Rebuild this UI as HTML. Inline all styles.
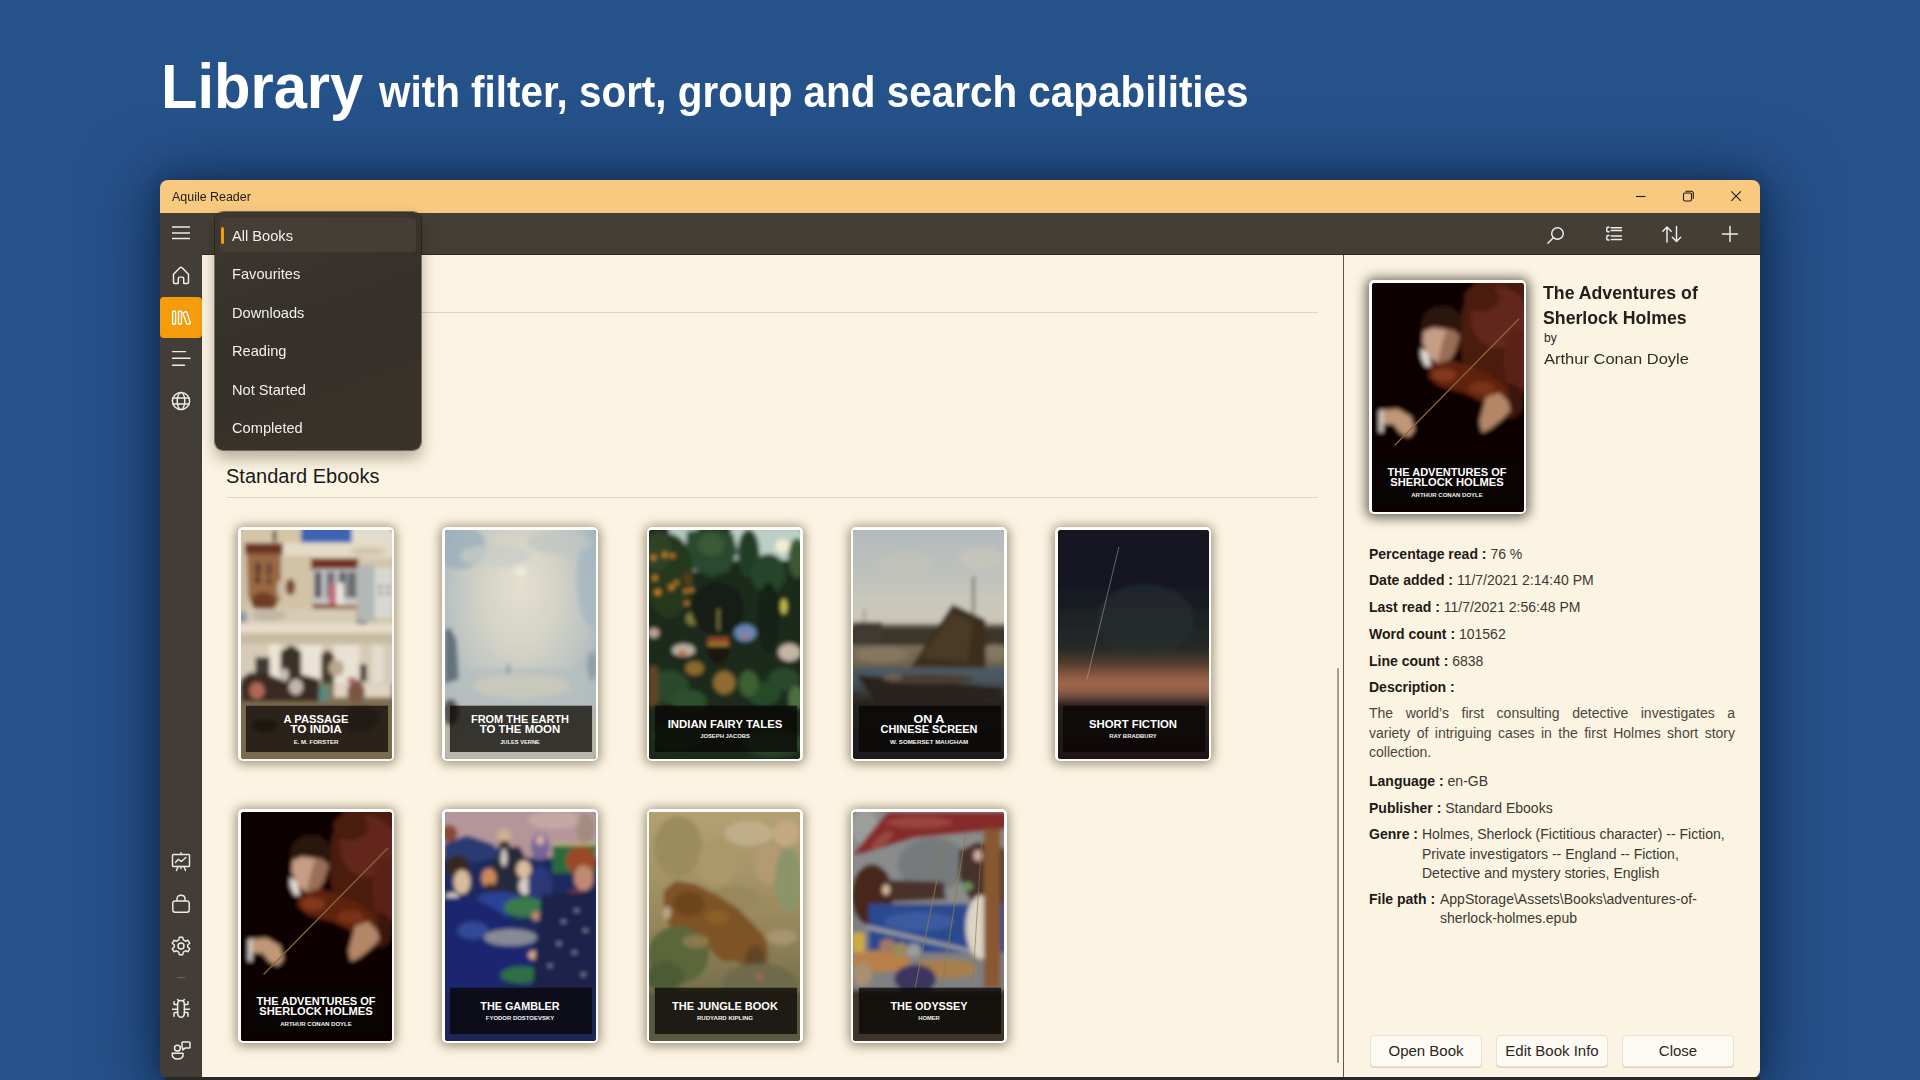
<!DOCTYPE html>
<html><head><meta charset="utf-8">
<style>
*{margin:0;padding:0;box-sizing:border-box}
html,body{width:1920px;height:1080px;overflow:hidden}
body{background:#26528a;font-family:"Liberation Sans",sans-serif;position:relative}
.a{position:absolute;white-space:nowrap}
.sx{transform-origin:0 0}
.h1{left:160.5px;top:45.5px;color:#fff;font-weight:bold;font-size:63px;line-height:80px}
.h2{left:379px;top:62px;color:#fff;font-weight:bold;font-size:44px;line-height:60px}
#shadow{position:absolute;left:160px;top:180px;width:1600px;height:898px;border-radius:8px;box-shadow:0 8px 70px 6px rgba(6,16,40,0.55),0 2px 24px rgba(6,16,40,0.4)}
#title{position:absolute;left:160px;top:180px;width:1600px;height:33px;background:#f8c97f;border-radius:8px 8px 0 0}
#tool{position:absolute;left:160px;top:213px;width:1600px;height:42px;background:#433f37;border-bottom:1px solid #2e2c27}
#side{position:absolute;left:160px;top:213px;width:42px;height:865px;background:#423e37;border-radius:0 0 0 8px}
#content{position:absolute;left:202px;top:255px;width:1141px;height:823px;background:#fcf4e2}
#divider{position:absolute;left:1343px;top:255px;width:1px;height:823px;background:#5d564c}
#panel{position:absolute;left:1344px;top:255px;width:416px;height:823px;background:#fcf4e2;border-radius:0 0 8px 0}
#bottomline{position:absolute;left:165px;top:1077px;width:1595px;height:3px;background:#2a2824}
svg{position:absolute;overflow:visible}
.ttl{font-size:13px;line-height:16px;color:#1e1b16}
.menu{position:absolute;left:215px;top:212px;width:206px;height:238px;border-radius:8px;background:linear-gradient(160deg,#3d3730 0%,#35302a 50%,#3a332b 100%);box-shadow:0 8px 16px rgba(40,30,10,0.35),0 0 0 1px rgba(20,18,15,0.5)}
.msel{position:absolute;left:220px;top:218px;width:196px;height:34px;border-radius:4px;background:#443e37}
.mbar{position:absolute;left:221px;top:227px;width:3px;height:17px;border-radius:2px;background:#f39c0d}
.mi{font-size:15px;line-height:18px;color:#f2efea;transform:scaleX(0.975)}
.grp{font-size:20px;line-height:24px;color:#1a1a1a}
.hl{position:absolute;height:1px;background:#ddd5c4}
.pt{color:#1c1a17}
.lab{font-weight:bold;color:#1c1a17}
.val{color:#3b3833}
.btn{position:absolute;top:1035px;height:32px;width:112px;border-radius:4px;background:#fdfaf4;border:1px solid #e9e2d4;box-shadow:0 1px 0 #ddd5c4}
.bt{font-size:15px;line-height:18px;color:#2a2723}
.ptitle{font-size:19px;line-height:24px;font-weight:bold;color:#22201c;transform:scaleX(0.932)}
.pby{font-size:12px;line-height:14px;color:#2a2723}
.pauth{font-size:15px;line-height:18px;color:#2f2c27;transform:scaleX(1.1)}
.prow{font-size:14px;line-height:18px}
.pdesc{font-size:14px;line-height:18px;color:#4a463f;width:366px;white-space:normal}
.j{text-align:justify;text-align-last:justify}
.card{position:absolute;border-radius:5px;background:#fcfcfa;padding:2.5px}
.cin{position:relative;overflow:hidden;border-radius:3px;background:#000}
.cin text{font-family:"Liberation Sans",sans-serif}
</style></head>
<body>
<div class="a h1 sx" id="t_lib" style="transform:scaleX(0.947)">Library</div>
<div class="a h2 sx" id="t_sub" style="transform:scaleX(0.919)">with filter, sort, group and search capabilities</div>

<div id="shadow"></div>
<div id="title"></div>
<div id="tool"></div>
<div id="side"></div>
<div id="content"></div>
<div id="divider"></div>
<div id="panel"></div>
<div id="bottomline"></div>

<!-- title bar -->
<div class="a ttl sx" style="left:172px;top:189px;transform:scaleX(0.957)">Aquile Reader</div>
<svg style="left:1630px;top:186px" width="20" height="20" viewBox="0 0 20 20"><path d="M6 10.5H15.5" stroke="#1b1b1b" stroke-width="1.1" fill="none"/></svg>
<svg style="left:1678px;top:186px" width="20" height="20" viewBox="0 0 20 20"><rect x="5.5" y="7" width="8" height="8" rx="1.5" stroke="#1b1b1b" stroke-width="1.1" fill="none"/><path d="M7.5 5.3H13.5A1.8 1.8 0 0 1 15.3 7.1V13" stroke="#1b1b1b" stroke-width="1.1" fill="none"/></svg>
<svg style="left:1726px;top:186px" width="20" height="20" viewBox="0 0 20 20"><path d="M5.3 5.3L14.8 14.8M14.8 5.3L5.3 14.8" stroke="#1b1b1b" stroke-width="1.1" fill="none"/></svg>

<!-- toolbar icons -->
<svg style="left:1545px;top:224px" width="22" height="22" viewBox="0 0 22 22"><circle cx="12.5" cy="9.5" r="5.8" stroke="#f1eee9" stroke-width="1.45" fill="none"/><path d="M8.3 13.8L2.8 19.3" stroke="#f1eee9" stroke-width="1.4" fill="none" stroke-linecap="round"/></svg>
<svg style="left:1603px;top:224px" width="22" height="22" viewBox="0 0 22 22"><path d="M6 3.3H4.8A1 1 0 0 0 3.8 4.3V6.8A1 1 0 0 0 4.8 7.8H6M6 11.5H4.8A1 1 0 0 0 3.8 12.5V15A1 1 0 0 0 4.8 16H6M8.2 3.8H18.5M8.2 6.4H18.5M8.2 12H18.5M8.2 15.5H18.5" stroke="#f1eee9" stroke-width="1.45" fill="none" stroke-linecap="round"/></svg>
<svg style="left:1661px;top:223px" width="22" height="22" viewBox="0 0 22 22"><path d="M6 19V4M1.8 8.2L6 4L10.2 8.2M15.5 3.5V18.5M11.3 14.3L15.5 18.5L19.7 14.3" stroke="#f1eee9" stroke-width="1.45" fill="none" stroke-linecap="round" stroke-linejoin="round"/></svg>
<svg style="left:1719px;top:223px" width="22" height="22" viewBox="0 0 22 22"><path d="M11 3.5V18.5M3.5 11H18.5" stroke="#f1eee9" stroke-width="1.45" fill="none" stroke-linecap="round"/></svg>

<!-- sidebar -->
<svg style="left:170px;top:224px" width="22" height="18" viewBox="0 0 22 18"><path d="M2 3H20M2 9H20M2 14.5H20" stroke="#eeebe6" stroke-width="1.45" fill="none"/></svg>
<svg style="left:170px;top:264px" width="22" height="22" viewBox="0 0 22 22"><path d="M3.5 10.2L10.2 3.6Q11 2.8 11.8 3.6L18.5 10.2V18.3Q18.5 19.5 17.3 19.5H14.3Q13.7 19.5 13.7 18.9V14.3Q13.7 13.1 12.5 13.1H9.5Q8.3 13.1 8.3 14.3V18.9Q8.3 19.5 7.7 19.5H4.7Q3.5 19.5 3.5 18.3Z" stroke="#f3f0eb" stroke-width="1.45" fill="none" stroke-linejoin="round"/></svg>
<div class="a" style="left:160px;top:297px;width:42px;height:41px;background:#f49c0c;border-radius:4px"></div>
<svg style="left:170px;top:304px" width="22" height="22" viewBox="0 0 22 22"><rect x="2.6" y="7.2" width="3" height="13" rx="0.8" stroke="#fff" stroke-width="1.35" fill="none"/><rect x="8.5" y="7.2" width="3" height="13" rx="0.8" stroke="#fff" stroke-width="1.35" fill="none"/><path d="M13.4 8.6L15.8 7.7Q16.5 7.5 16.8 8.2L20.3 18.6Q20.5 19.3 19.8 19.5L17.6 20.3Q16.9 20.5 16.6 19.8L13 9.4Q12.8 8.8 13.4 8.6Z" stroke="#fff" stroke-width="1.35" fill="none"/></svg>
<svg style="left:170px;top:347px" width="22" height="22" viewBox="0 0 22 22"><path d="M2.5 4.6H15.5M2.5 11.3H20M2.5 18.3H14.5" stroke="#eeebe6" stroke-width="1.45" fill="none" stroke-linecap="round"/></svg>
<svg style="left:170px;top:390px" width="22" height="22" viewBox="0 0 22 22"><circle cx="11" cy="11" r="8.6" stroke="#eeebe6" stroke-width="1.45" fill="none"/><ellipse cx="11" cy="11" rx="3.8" ry="8.6" stroke="#eeebe6" stroke-width="1.45" fill="none"/><path d="M2.6 8H19.4M2.6 14H19.4" stroke="#eeebe6" stroke-width="1.45" fill="none"/></svg>

<svg style="left:170px;top:851px" width="22" height="22" viewBox="0 0 22 22"><rect x="2.5" y="3.5" width="17" height="12" rx="0.8" stroke="#eeebe6" stroke-width="1.45" fill="none"/><path d="M11 1.8V3.5M5.5 11.5L8.3 8.3L11.3 10.5L15.8 6.5M8 15.5L6.5 19.5M14 15.5L15.5 19.5M11 15.5V17.5" stroke="#eeebe6" stroke-width="1.45" fill="none" stroke-linecap="round" stroke-linejoin="round"/></svg>
<svg style="left:170px;top:893px" width="22" height="22" viewBox="0 0 22 22"><rect x="2.8" y="8" width="16.4" height="11.3" rx="2.2" stroke="#eeebe6" stroke-width="1.45" fill="none"/><path d="M7 8V6Q7 2.3 11 2.3Q15 2.3 15 6V8" stroke="#eeebe6" stroke-width="1.45" fill="none"/></svg>
<svg style="left:170px;top:935px" width="22" height="22" viewBox="0 0 22 22"><path d="M9.3 2.3H12.7L13.3 4.9L15.5 6.2L18 5.3L19.7 8.2L17.7 10V12L19.7 13.8L18 16.7L15.5 15.8L13.3 17.1L12.7 19.7H9.3L8.7 17.1L6.5 15.8L4 16.7L2.3 13.8L4.3 12V10L2.3 8.2L4 5.3L6.5 6.2L8.7 4.9Z" stroke="#eeebe6" stroke-width="1.45" fill="none" stroke-linejoin="round"/><circle cx="11" cy="11" r="3" stroke="#eeebe6" stroke-width="1.45" fill="none"/></svg>
<div class="a" style="left:177px;top:977px;width:8px;height:1px;background:#6a655e"></div>
<svg style="left:170px;top:998px" width="22" height="22" viewBox="0 0 22 22"><path d="M7.6 6.2Q7.6 2.4 11 2.4Q14.4 2.4 14.4 6.2V14.6Q14.4 19.3 11 19.3Q7.6 19.3 7.6 14.6Z" stroke="#eeebe6" stroke-width="1.5" fill="none"/><path d="M7.6 6.5H4.8Q4 6.5 4 5.7V3.8M7.6 11.2H2.5M7.6 14.6H4.8Q4 14.6 4 15.4V18.3M14.4 6.5H17.2Q18 6.5 18 5.7V3.8M14.4 11.2H19.5M14.4 14.6H17.2Q18 14.6 18 15.4V18.3M8.8 2.8L7.6 1.5M13.2 2.8L14.4 1.5" stroke="#eeebe6" stroke-width="1.5" fill="none" stroke-linecap="round" stroke-linejoin="round"/></svg>
<svg style="left:170px;top:1039px" width="22" height="22" viewBox="0 0 22 22"><circle cx="7.4" cy="9.2" r="2.9" stroke="#eeebe6" stroke-width="1.5" fill="none"/><path d="M2.2 14.2H12.6Q13.2 14.2 13.2 15Q13.2 20 7.7 20Q2.2 20 2.2 15Q2.2 14.2 2.8 14.2Z" stroke="#eeebe6" stroke-width="1.5" fill="none" stroke-linejoin="round"/><path d="M12.5 3H19.2Q20 3 20 3.8V8.3Q20 9.1 19.2 9.1H15L12.8 11V9.1Q12 9.1 12 8.3V3.8Q12 3 12.8 3Z" stroke="#eeebe6" stroke-width="1.5" fill="none" stroke-linejoin="round"/></svg>

<!-- content -->
<div class="hl" style="left:227px;top:312px;width:1091px"></div>
<div class="a grp sx" style="left:226px;top:464px">Standard Ebooks</div>
<div class="hl" style="left:227px;top:497px;width:1091px"></div>
<div class="a" style="left:1337px;top:668px;width:2px;height:395px;border-radius:1px;background:#a39b8e"></div>

<!--COVERS-->
<svg width="0" height="0" style="position:absolute"><defs><filter id="bl" x="-10%" y="-10%" width="120%" height="120%"><feGaussianBlur stdDeviation="9"/></filter><filter id="nz" x="0" y="0" width="100%" height="100%"><feTurbulence type="fractalNoise" baseFrequency="0.09" numOctaves="2" seed="3"/><feColorMatrix values="0 0 0 0 0.5  0 0 0 0 0.5  0 0 0 0 0.5  3 0 0 0 -1.2"/></filter></defs></svg>
<div class="card" style="left:238px;top:527px;width:156px;height:234px;box-shadow:0 1px 11px 2px rgba(60,45,20,0.5)"><div class="cin" style="width:151px;height:229px"><svg style="left:-4.5px;top:-4.5px" width="160" height="238" viewBox="0 0 726 1080"><g filter="url(#bl)"><rect x="0" y="0" width="726" height="1080" fill="#d2c6ac" /><rect x="0" y="0" width="295" height="90" fill="#d4c5a6" /><rect x="295" y="0" width="235" height="85" fill="#3e64b2" /><rect x="525" y="0" width="201" height="90" fill="#e2dccc" /><ellipse cx="175" cy="50" rx="8" ry="30" fill="#2a2420" /><rect x="170" y="80" width="556" height="70" fill="#e4dbc6" /><ellipse cx="600" cy="120" rx="80" ry="20" fill="#d0c6b0" /><rect x="40" y="82" width="172" height="55" fill="#6c3222" /><polygon points="48,130 205,130 205,330 160,405 100,400 55,330" fill="#9a6842" /><ellipse cx="100" cy="200" rx="14" ry="32" fill="#5a3c2c" /><ellipse cx="150" cy="200" rx="14" ry="32" fill="#6a4a34" /><ellipse cx="98" cy="250" rx="10" ry="16" fill="#2a2220" /><ellipse cx="150" cy="255" rx="10" ry="16" fill="#4a3a2a" /><ellipse cx="125" cy="350" rx="55" ry="45" fill="#6e3c24" /><rect x="205" y="140" width="140" height="245" fill="#d2c2a6" /><ellipse cx="247" cy="282" rx="22" ry="38" fill="#7a4a30" /><ellipse cx="200" cy="290" rx="14" ry="40" fill="#c8bca8" /><rect x="0" y="130" width="48" height="280" fill="#ccbfa6" /><rect x="340" y="150" width="215" height="55" fill="#763020" /><rect x="350" y="200" width="200" height="160" fill="#c6c8c8" /><rect x="356" y="212" width="32" height="118" fill="#56585e" /><rect x="410" y="212" width="38" height="118" fill="#6e7074" /><rect x="466" y="212" width="34" height="118" fill="#5e6064" /><rect x="506" y="212" width="40" height="118" fill="#6a6a6c" /><rect x="420" y="262" width="35" height="112" fill="#bc6c7a" /><rect x="455" y="262" width="35" height="118" fill="#e6e6de" /><polygon points="346,356 560,368 558,452 360,452" fill="#8a4e28" /><ellipse cx="450" cy="410" rx="90" ry="28" fill="#6e3418" /><polygon points="510,430 585,392 600,470 545,492" fill="#3a2e26" /><rect x="550" y="180" width="80" height="260" fill="#b2b8b6" /><rect x="630" y="195" width="78" height="225" fill="#d8d8d2" /><ellipse cx="655" cy="280" rx="7" ry="7" fill="#3a3a3a" /><ellipse cx="690" cy="280" rx="7" ry="7" fill="#3a3a3a" /><ellipse cx="655" cy="310" rx="7" ry="7" fill="#3a3a3a" /><ellipse cx="690" cy="310" rx="7" ry="7" fill="#3a3a3a" /><rect x="48" y="380" width="500" height="70" fill="#d6cbb6" /><ellipse cx="150" cy="410" rx="80" ry="25" fill="#c2b6a2" /><rect x="0" y="395" width="50" height="45" fill="#8c98a6" /><rect x="0" y="448" width="726" height="45" fill="#e6ddca" /><rect x="0" y="490" width="726" height="52" fill="#c8bca2" /><rect x="0" y="540" width="726" height="180" fill="#d6cbb6" /><rect x="148" y="540" width="54" height="180" fill="#ebe3d3" /><rect x="287" y="545" width="99" height="175" fill="#ebe3d5" /><rect x="445" y="545" width="115" height="175" fill="#e9e2d4" /><rect x="619" y="545" width="50" height="175" fill="#e4ddd0" /><polygon points="202,812 202,575 250,545 296,575 296,812" fill="#3a3026" /><polygon points="386,782 386,590 415,565 445,590 445,782" fill="#4a3a2e" /><rect x="88" y="600" width="65" height="100" fill="#3c3a36" /><rect x="562" y="632" width="32" height="78" fill="#48423c" /><rect x="0" y="720" width="726" height="360" fill="#86745a" /><rect x="445" y="719" width="260" height="62" fill="#e0d4c2" /><polygon points="20,700 60,670 130,670 200,700 300,680 380,700 370,880 300,880 200,820 120,840 30,880" fill="#3a2a22" /><ellipse cx="95" cy="752" rx="35" ry="38" fill="#b06858" /><ellipse cx="272" cy="735" rx="32" ry="36" fill="#c4b6ae" /><ellipse cx="398" cy="770" rx="22" ry="52" fill="#5a8a80" /><ellipse cx="545" cy="760" rx="40" ry="55" fill="#7a5640" /><ellipse cx="527" cy="705" rx="22" ry="14" fill="#b06070" /><ellipse cx="455" cy="649" rx="35" ry="38" fill="#b8a88e" /><ellipse cx="220" cy="680" rx="20" ry="30" fill="#c8c0b8" /><rect x="0" y="800" width="726" height="280" fill="#7c6a4e" /><ellipse cx="130" cy="910" rx="60" ry="30" fill="#4a3c2c" /><ellipse cx="560" cy="880" rx="90" ry="60" fill="#5e4e3c" /></g><rect x="45" y="820" width="645" height="210" fill="rgba(8,6,4,0.7)"/><text x="363" y="897" text-anchor="middle" font-size="50" font-weight="bold" fill="#fff" textLength="295" lengthAdjust="spacingAndGlyphs">A PASSAGE</text><text x="363" y="945" text-anchor="middle" font-size="50" font-weight="bold" fill="#fff" textLength="234" lengthAdjust="spacingAndGlyphs">TO INDIA</text><text x="363" y="993" text-anchor="middle" font-size="26" font-weight="bold" fill="#f4f4f4" textLength="203" lengthAdjust="spacingAndGlyphs">E. M. FORSTER</text></svg></div></div>
<div class="card" style="left:442.3px;top:527px;width:156px;height:234px;box-shadow:0 1px 11px 2px rgba(60,45,20,0.5)"><div class="cin" style="width:151px;height:229px"><svg style="left:-4.5px;top:-4.5px" width="160" height="238" viewBox="0 0 726 1080"><defs><radialGradient id="g2" cx="0.5" cy="0.33" r="0.62" fx="0.5" fy="0.25"><stop offset="0" stop-color="#e4e0d0"/><stop offset="0.35" stop-color="#d6d4c6"/><stop offset="0.7" stop-color="#bcc4c2"/><stop offset="1" stop-color="#98aab6"/></radialGradient></defs><g filter="url(#bl)"><rect x="0" y="0" width="726" height="1080" fill="url(#g2)" /><ellipse cx="90" cy="100" rx="120" ry="100" fill="#9cb0bc" opacity="0.8"/><ellipse cx="690" cy="240" rx="70" ry="220" fill="#a4b6c2" opacity="0.8"/><ellipse cx="250" cy="140" rx="160" ry="50" fill="#c8ccc8" opacity="0.7"/><ellipse cx="540" cy="80" rx="150" ry="50" fill="#c0c6c4" opacity="0.7"/><ellipse cx="365" cy="210" rx="25" ry="23" fill="#eeeadc" /><rect x="0" y="650" width="726" height="180" fill="#b6c0c0" opacity="0.85"/><ellipse cx="370" cy="730" rx="220" ry="55" fill="#c8c8bc" /><polygon points="20,480 45,465 75,520 85,700 20,720" fill="#64727e" /><ellipse cx="690" cy="640" rx="22" ry="65" fill="#8e9ca6" /><ellipse cx="310" cy="655" rx="8" ry="25" fill="#8a98a0" /><rect x="0" y="830" width="726" height="250" fill="#b8b8aa" /><ellipse cx="48" cy="850" rx="38" ry="60" fill="#55524c" /></g><rect x="45" y="820" width="645" height="210" fill="rgba(8,6,4,0.74)"/><text x="363" y="897" text-anchor="middle" font-size="50" font-weight="bold" fill="#fff" textLength="445" lengthAdjust="spacingAndGlyphs">FROM THE EARTH</text><text x="363" y="945" text-anchor="middle" font-size="50" font-weight="bold" fill="#fff" textLength="365" lengthAdjust="spacingAndGlyphs">TO THE MOON</text><text x="363" y="993" text-anchor="middle" font-size="26" font-weight="bold" fill="#f4f4f4" textLength="180" lengthAdjust="spacingAndGlyphs">JULES VERNE</text></svg></div></div>
<div class="card" style="left:646.6px;top:527px;width:156px;height:234px;box-shadow:0 1px 11px 2px rgba(60,45,20,0.5)"><div class="cin" style="width:151px;height:229px"><svg style="left:-4.5px;top:-4.5px" width="160" height="238" viewBox="0 0 726 1080"><g filter="url(#bl)"><rect x="0" y="0" width="726" height="1080" fill="#1c2a1a" /><rect x="110" y="10" width="130" height="200" fill="#b4c8c0" /><rect x="390" y="10" width="330" height="150" fill="#bccfc6" /><ellipse cx="300" cy="170" rx="20" ry="40" fill="#a8bcb4" /><ellipse cx="625" cy="95" rx="34" ry="32" fill="#eeeed6" /><polygon points="190,30 290,15 400,40 420,120 380,210 300,235 220,200 185,120" fill="#2c4a2e" /><ellipse cx="300" cy="90" rx="60" ry="50" fill="#3a5a38" /><ellipse cx="470" cy="130" rx="50" ry="110" fill="#223c26" /><ellipse cx="560" cy="220" rx="80" ry="90" fill="#28442a" /><ellipse cx="690" cy="150" rx="40" ry="90" fill="#3a5832" /><ellipse cx="110" cy="230" rx="110" ry="190" fill="#26381f" /><ellipse cx="60" cy="120" rx="60" ry="90" fill="#2e4226" /><ellipse cx="38" cy="148" rx="12" ry="12" fill="#d0842c" /><ellipse cx="90" cy="135" rx="12" ry="12" fill="#d0842c" /><ellipse cx="125" cy="140" rx="11" ry="11" fill="#d0842c" /><ellipse cx="45" cy="240" rx="12" ry="12" fill="#d0842c" /><ellipse cx="120" cy="282" rx="12" ry="12" fill="#d0842c" /><ellipse cx="58" cy="305" rx="14" ry="14" fill="#d0842c" /><ellipse cx="185" cy="300" rx="10" ry="10" fill="#d0842c" /><ellipse cx="190" cy="355" rx="10" ry="10" fill="#d0842c" /><ellipse cx="142" cy="262" rx="10" ry="10" fill="#d0842c" /><ellipse cx="210" cy="295" rx="10" ry="10" fill="#d0842c" /><ellipse cx="195" cy="245" rx="18" ry="30" fill="#5a3a1a" /><ellipse cx="215" cy="425" rx="30" ry="30" fill="#7c7c3a" /><ellipse cx="330" cy="380" rx="120" ry="120" fill="#141e12" /><ellipse cx="560" cy="420" rx="50" ry="160" fill="#162414" /><ellipse cx="630" cy="370" rx="15" ry="35" fill="#c4c050" /><ellipse cx="40" cy="490" rx="24" ry="22" fill="#c0a890" /><ellipse cx="175" cy="568" rx="52" ry="28" fill="#bcb4a4" /><ellipse cx="170" cy="580" rx="20" ry="12" fill="#c06a40" /><ellipse cx="655" cy="578" rx="50" ry="40" fill="#c4b6a6" /><ellipse cx="455" cy="490" rx="50" ry="38" fill="#6a88b6" /><ellipse cx="455" cy="500" rx="12" ry="10" fill="#c06a40" /><ellipse cx="333" cy="560" rx="52" ry="70" fill="#1a1410" /><rect x="285" y="515" width="95" height="15" fill="#b8382a" /><rect x="285" y="536" width="95" height="11" fill="#c8a040" /><rect x="290" y="505" width="85" height="8" fill="#3a5a30" /><line x1="333" y1="380" x2="333" y2="480" stroke="#b0a060" stroke-width="6"/><ellipse cx="225" cy="650" rx="42" ry="32" fill="#8a6a2e" /><ellipse cx="360" cy="715" rx="50" ry="52" fill="#8c6c30" /><ellipse cx="110" cy="735" rx="90" ry="75" fill="#2c4a2c" /><ellipse cx="200" cy="800" rx="80" ry="50" fill="#2e502e" /><ellipse cx="540" cy="765" rx="75" ry="55" fill="#284a2c" /><ellipse cx="630" cy="700" rx="70" ry="50" fill="#2a4a2a" /><ellipse cx="470" cy="720" rx="45" ry="60" fill="#3e5e32" /><ellipse cx="685" cy="790" rx="35" ry="60" fill="#4e6e40" /><rect x="15" y="640" width="45" height="180" fill="#5e4428" /><rect x="0" y="830" width="726" height="250" fill="#1c2a1a" /><ellipse cx="580" cy="990" rx="140" ry="60" fill="#2a442a" /><ellipse cx="150" cy="960" rx="110" ry="60" fill="#24401f" /></g><rect x="45" y="820" width="645" height="210" fill="rgba(8,6,4,0.74)"/><text x="363" y="920" text-anchor="middle" font-size="50" font-weight="bold" fill="#fff" textLength="520" lengthAdjust="spacingAndGlyphs">INDIAN FAIRY TALES</text><text x="363" y="968" text-anchor="middle" font-size="26" font-weight="bold" fill="#f4f4f4" textLength="225" lengthAdjust="spacingAndGlyphs">JOSEPH JACOBS</text></svg></div></div>
<div class="card" style="left:850.9px;top:527px;width:156px;height:234px;box-shadow:0 1px 11px 2px rgba(60,45,20,0.5)"><div class="cin" style="width:151px;height:229px"><svg style="left:-4.5px;top:-4.5px" width="160" height="238" viewBox="0 0 726 1080"><defs><linearGradient id="g4" x1="0" y1="0" x2="0" y2="1"><stop offset="0" stop-color="#b3babc"/><stop offset="0.19" stop-color="#bdc1bc"/><stop offset="0.32" stop-color="#c9c7bc"/><stop offset="0.41" stop-color="#cbc6b6"/><stop offset="0.42" stop-color="#6a6458"/><stop offset="0.44" stop-color="#3a3428"/><stop offset="0.5" stop-color="#3c362a"/><stop offset="0.51" stop-color="#7a6e58"/><stop offset="0.59" stop-color="#6e6450"/><stop offset="0.6" stop-color="#4e5a60"/><stop offset="0.65" stop-color="#4a5860"/><stop offset="0.74" stop-color="#2c261e"/><stop offset="0.76" stop-color="#222220"/><stop offset="1" stop-color="#1c1c1a"/></linearGradient></defs><g filter="url(#bl)"><rect x="0" y="0" width="726" height="1080" fill="url(#g4)" /><ellipse cx="260" cy="170" rx="120" ry="50" fill="#c4c4b6" opacity="0.6"/><ellipse cx="600" cy="150" rx="100" ry="50" fill="#cac8ba" opacity="0.6"/><rect x="20" y="440" width="130" height="100" fill="#403a30" /><ellipse cx="150" cy="590" rx="120" ry="35" fill="#8a7c62" opacity="0.8"/><ellipse cx="660" cy="580" rx="50" ry="40" fill="#8a7e66" opacity="0.7"/><polygon points="280,645 470,360 620,430 620,648" fill="#3c2e1f" /><polygon points="330,600 470,400 560,440 540,620" fill="#4a3a28" /><line x1="565" y1="235" x2="565" y2="400" stroke="#3a3228" stroke-width="8"/><line x1="70" y1="380" x2="70" y2="460" stroke="#4a4438" stroke-width="5"/><polygon points="30,680 700,738 690,792 120,800" fill="#2c241b" /><ellipse cx="360" cy="700" rx="210" ry="22" fill="#4a3e32" /><ellipse cx="200" cy="690" rx="40" ry="18" fill="#6a5e50" /></g><rect x="45" y="820" width="645" height="210" fill="rgba(8,6,4,0.74)"/><text x="363" y="897" text-anchor="middle" font-size="50" font-weight="bold" fill="#fff" textLength="140" lengthAdjust="spacingAndGlyphs">ON A</text><text x="363" y="945" text-anchor="middle" font-size="50" font-weight="bold" fill="#fff" textLength="440" lengthAdjust="spacingAndGlyphs">CHINESE SCREEN</text><text x="363" y="993" text-anchor="middle" font-size="26" font-weight="bold" fill="#f4f4f4" textLength="355" lengthAdjust="spacingAndGlyphs">W. SOMERSET MAUGHAM</text></svg></div></div>
<div class="card" style="left:1055.2px;top:527px;width:156px;height:234px;box-shadow:0 1px 11px 2px rgba(60,45,20,0.5)"><div class="cin" style="width:151px;height:229px"><svg style="left:-4.5px;top:-4.5px" width="160" height="238" viewBox="0 0 726 1080"><defs><linearGradient id="g5" x1="0" y1="0" x2="0" y2="1"><stop offset="0" stop-color="#121420"/><stop offset="0.28" stop-color="#161a22"/><stop offset="0.42" stop-color="#1e2426"/><stop offset="0.52" stop-color="#282a27"/><stop offset="0.574" stop-color="#4a3a2c"/><stop offset="0.63" stop-color="#885840"/><stop offset="0.667" stop-color="#a2684b"/><stop offset="0.704" stop-color="#8a5a46"/><stop offset="0.731" stop-color="#5a4038"/><stop offset="0.76" stop-color="#2a1e1c"/><stop offset="1" stop-color="#1e1614"/></linearGradient></defs><g filter="url(#bl)"><rect x="0" y="0" width="726" height="1080" fill="url(#g5)" /><ellipse cx="420" cy="430" rx="220" ry="160" fill="#28322f" opacity="0.55"/></g><line x1="299" y1="100" x2="154" y2="700" stroke="#b8b8b0" stroke-width="2.2"/><rect x="45" y="820" width="645" height="210" fill="rgba(8,6,4,0.74)"/><text x="363" y="920" text-anchor="middle" font-size="50" font-weight="bold" fill="#fff" textLength="400" lengthAdjust="spacingAndGlyphs">SHORT FICTION</text><text x="363" y="968" text-anchor="middle" font-size="26" font-weight="bold" fill="#f4f4f4" textLength="215" lengthAdjust="spacingAndGlyphs">RAY BRADBURY</text></svg></div></div>
<div class="card" style="left:238px;top:809px;width:156px;height:234px;box-shadow:0 1px 11px 2px rgba(60,45,20,0.5)"><div class="cin" style="width:151px;height:229px"><svg style="left:-4.5px;top:-4.5px" width="160" height="238" viewBox="0 0 726 1080"><g filter="url(#bl)"><rect x="0" y="0" width="726" height="1080" fill="#110605" /><ellipse cx="610" cy="260" rx="190" ry="310" fill="#4a1a0c" /><ellipse cx="600" cy="180" rx="130" ry="140" fill="#62261a" /><ellipse cx="520" cy="90" rx="80" ry="60" fill="#4a1c10" /><ellipse cx="680" cy="380" rx="60" ry="150" fill="#5a2212" /><ellipse cx="650" cy="560" rx="60" ry="80" fill="#3a140a" /><polygon points="245,215 260,160 310,128 380,128 425,170 432,235 400,250 300,222 255,250" fill="#2a140c" /><polygon points="255,240 300,222 392,236 422,262 402,332 372,382 322,392 280,362 250,292" fill="#9a6e58" /><polygon points="258,245 300,228 360,236 340,300 320,380 285,360 255,292" fill="#c69e86" /><polygon points="245,318 276,338 292,402 266,402 246,362" fill="#e2dad2" /><polygon points="280,400 380,370 470,400 560,440 640,500 642,562 590,582 520,562 440,522 330,492 280,452" fill="#5e2410" /><ellipse cx="350" cy="440" rx="55" ry="30" fill="#82381a" /><ellipse cx="520" cy="500" rx="60" ry="30" fill="#7a3216" /><polygon points="62,600 140,594 200,630 216,690 190,722 150,702 120,662 70,662" fill="#c09878" /><rect x="55" y="600" width="18" height="100" fill="#d8d0c8" /><polygon points="540,540 600,520 640,560 652,600 612,642 562,682 522,702 510,652" fill="#b48666" /><rect x="0" y="800" width="726" height="280" fill="#0a0605" /></g><line x1="690" y1="185" x2="125" y2="760" stroke="#8a6838" stroke-width="5.5"/><rect x="45" y="820" width="645" height="210" fill="rgba(8,6,4,0.74)"/><text x="363" y="897" text-anchor="middle" font-size="50" font-weight="bold" fill="#fff" textLength="540" lengthAdjust="spacingAndGlyphs">THE ADVENTURES OF</text><text x="363" y="945" text-anchor="middle" font-size="50" font-weight="bold" fill="#fff" textLength="515" lengthAdjust="spacingAndGlyphs">SHERLOCK HOLMES</text><text x="363" y="993" text-anchor="middle" font-size="26" font-weight="bold" fill="#f4f4f4" textLength="325" lengthAdjust="spacingAndGlyphs">ARTHUR CONAN DOYLE</text></svg></div></div>
<div class="card" style="left:442.3px;top:809px;width:156px;height:234px;box-shadow:0 1px 11px 2px rgba(60,45,20,0.5)"><div class="cin" style="width:151px;height:229px"><svg style="left:-4.5px;top:-4.5px" width="160" height="238" viewBox="0 0 726 1080"><g filter="url(#bl)"><rect x="0" y="0" width="726" height="1080" fill="#1e2a5e" /><rect x="0" y="0" width="726" height="230" fill="#b4969a" /><ellipse cx="520" cy="60" rx="120" ry="40" fill="#c4a8a4" /><ellipse cx="660" cy="100" rx="40" ry="70" fill="#a48a80" /><ellipse cx="40" cy="120" rx="40" ry="40" fill="#8a4a30" /><polygon points="230,190 360,178 405,260 425,430 250,430 232,300" fill="#282a3a" /><ellipse cx="290" cy="132" rx="30" ry="35" fill="#d0b090" /><ellipse cx="292" cy="178" rx="26" ry="26" fill="#3a3030" /><ellipse cx="290" cy="230" rx="14" ry="40" fill="#d8d0c8" /><ellipse cx="455" cy="180" rx="42" ry="62" fill="#76649a" /><ellipse cx="455" cy="150" rx="20" ry="24" fill="#d4ae9e" /><polygon points="15,170 120,128 240,168 285,222 150,252 15,242" fill="#2a3a72" /><rect x="510" y="168" width="200" height="132" fill="#2a6a3c" /><rect x="510" y="165" width="200" height="10" fill="#c8c070" /><ellipse cx="80" cy="270" rx="55" ry="50" fill="#382820" /><ellipse cx="100" cy="340" rx="38" ry="55" fill="#d8bc9c" /><ellipse cx="55" cy="405" rx="30" ry="15" fill="#e4dcd4" /><ellipse cx="222" cy="322" rx="34" ry="44" fill="#cc8a5a" /><ellipse cx="228" cy="365" rx="22" ry="18" fill="#3a2820" /><ellipse cx="380" cy="282" rx="34" ry="40" fill="#dcbe9e" /><ellipse cx="385" cy="360" rx="28" ry="40" fill="#d6cec6" /><ellipse cx="455" cy="360" rx="55" ry="90" fill="#2a3878" /><ellipse cx="270" cy="440" rx="120" ry="55" fill="#2c4294" /><ellipse cx="385" cy="455" rx="95" ry="45" fill="#3a7a4c" /><ellipse cx="200" cy="505" rx="30" ry="22" fill="#d49870" /><ellipse cx="440" cy="495" rx="25" ry="20" fill="#c48a6a" /><polygon points="15,410 150,410 280,480 420,620 420,760 200,830 15,830" fill="#1a2870" /><ellipse cx="150" cy="560" rx="70" ry="40" fill="#3a50a0" opacity="0.8"/><ellipse cx="320" cy="592" rx="120" ry="38" fill="#888a98" /><ellipse cx="430" cy="672" rx="30" ry="20" fill="#deae8e" /><ellipse cx="370" cy="762" rx="95" ry="38" fill="#2e7044" /><ellipse cx="640" cy="245" rx="68" ry="68" fill="#9a4828" /><ellipse cx="652" cy="322" rx="44" ry="58" fill="#c08a70" /><ellipse cx="622" cy="392" rx="40" ry="14" fill="#a04030" /><polygon points="460,400 700,380 715,1080 400,1080 430,700" fill="#1c2448" /><ellipse cx="560" cy="520" rx="12" ry="8" fill="#8088a8" /><ellipse cx="620" cy="470" rx="12" ry="8" fill="#8088a8" /><ellipse cx="660" cy="560" rx="12" ry="8" fill="#8088a8" /><ellipse cx="540" cy="620" rx="12" ry="8" fill="#8088a8" /><ellipse cx="610" cy="660" rx="12" ry="8" fill="#8088a8" /><ellipse cx="500" cy="720" rx="12" ry="8" fill="#8088a8" /><ellipse cx="650" cy="760" rx="12" ry="8" fill="#8088a8" /><rect x="0" y="830" width="726" height="250" fill="#1e2858" /></g><rect x="45" y="820" width="645" height="210" fill="rgba(8,6,4,0.74)"/><text x="363" y="920" text-anchor="middle" font-size="50" font-weight="bold" fill="#fff" textLength="360" lengthAdjust="spacingAndGlyphs">THE GAMBLER</text><text x="363" y="968" text-anchor="middle" font-size="26" font-weight="bold" fill="#f4f4f4" textLength="310" lengthAdjust="spacingAndGlyphs">FYODOR DOSTOEVSKY</text></svg></div></div>
<div class="card" style="left:646.6px;top:809px;width:156px;height:234px;box-shadow:0 1px 11px 2px rgba(60,45,20,0.5)"><div class="cin" style="width:151px;height:229px"><svg style="left:-4.5px;top:-4.5px" width="160" height="238" viewBox="0 0 726 1080"><defs><linearGradient id="g8" x1="0" y1="0" x2="0" y2="1"><stop offset="0" stop-color="#b4a274"/><stop offset="0.25" stop-color="#a8966a"/><stop offset="0.5" stop-color="#96865a"/><stop offset="0.7" stop-color="#7e7650"/><stop offset="1" stop-color="#5e5a3e"/></linearGradient></defs><g filter="url(#bl)"><rect x="0" y="0" width="726" height="1080" fill="url(#g8)" /><ellipse cx="470" cy="120" rx="110" ry="55" fill="#c0ae88" /><ellipse cx="640" cy="120" rx="60" ry="60" fill="#c4a882" /><ellipse cx="150" cy="180" rx="110" ry="140" fill="#9c8c5c" /><ellipse cx="330" cy="250" rx="90" ry="110" fill="#aa9868" /><ellipse cx="560" cy="260" rx="60" ry="90" fill="#b49a72" /><ellipse cx="650" cy="330" rx="60" ry="150" fill="#8c946a" /><ellipse cx="400" cy="420" rx="120" ry="60" fill="#98885c" /><ellipse cx="620" cy="590" rx="70" ry="35" fill="#a89470" /><polygon points="85,380 140,335 230,350 330,400 420,460 500,540 550,600 560,670 550,745 505,765 455,730 420,700 350,700 300,650 220,590 120,555 85,480" fill="#7e5226" /><ellipse cx="200" cy="440" rx="70" ry="55" fill="#6a441e" /><ellipse cx="330" cy="500" rx="55" ry="35" fill="#8c5e28" /><ellipse cx="500" cy="690" rx="45" ry="60" fill="#5e4426" /><ellipse cx="100" cy="480" rx="18" ry="30" fill="#b8a888" /><ellipse cx="150" cy="670" rx="140" ry="130" fill="#5c663a" /><ellipse cx="90" cy="770" rx="85" ry="70" fill="#4c5c34" /><ellipse cx="230" cy="610" rx="60" ry="30" fill="#8a7a4e" /><ellipse cx="520" cy="800" rx="170" ry="90" fill="#6e6a4c" /><ellipse cx="520" cy="770" rx="14" ry="14" fill="#a86a5c" /><rect x="0" y="840" width="726" height="240" fill="#5a5840" /></g><rect x="45" y="820" width="645" height="210" fill="rgba(8,6,4,0.74)"/><text x="363" y="920" text-anchor="middle" font-size="50" font-weight="bold" fill="#fff" textLength="480" lengthAdjust="spacingAndGlyphs">THE JUNGLE BOOK</text><text x="363" y="968" text-anchor="middle" font-size="26" font-weight="bold" fill="#f4f4f4" textLength="255" lengthAdjust="spacingAndGlyphs">RUDYARD KIPLING</text></svg></div></div>
<div class="card" style="left:850.9px;top:809px;width:156px;height:234px;box-shadow:0 1px 11px 2px rgba(60,45,20,0.5)"><div class="cin" style="width:151px;height:229px"><svg style="left:-4.5px;top:-4.5px" width="160" height="238" viewBox="0 0 726 1080"><g filter="url(#bl)"><rect x="0" y="0" width="726" height="1080" fill="#7e8082" /><rect x="0" y="0" width="726" height="460" fill="#8a8c8c" /><ellipse cx="70" cy="90" rx="60" ry="80" fill="#9c9e9c" /><ellipse cx="380" cy="260" rx="160" ry="120" fill="#767a7c" /><polygon points="15,218 175,22 720,22 720,100 300,140 60,212" fill="#862c2c" /><ellipse cx="320" cy="70" rx="150" ry="25" fill="#9a4440" /><ellipse cx="150" cy="150" rx="60" ry="20" fill="#9a4a44" transform="rotate(-40 150 150)"/><ellipse cx="105" cy="400" rx="95" ry="140" fill="#46281c" /><polygon points="150,330 430,340 440,420 200,430" fill="#48302a" /><ellipse cx="168" cy="375" rx="18" ry="24" fill="#d4b49c" /><polygon points="500,200 580,160 710,190 710,440 560,440 500,320" fill="#46302a" /><ellipse cx="585" cy="220" rx="20" ry="26" fill="#d2ae9c" /><rect x="90" y="440" width="620" height="220" fill="#2c4a8e" /><ellipse cx="320" cy="520" rx="160" ry="45" fill="#3a5aa0" /><ellipse cx="600" cy="545" rx="70" ry="145" fill="#dcd4c4" /><ellipse cx="538" cy="360" rx="24" ry="18" fill="#6a9a60" /><rect x="612" y="100" width="76" height="720" fill="#885830" /><rect x="15" y="570" width="55" height="90" fill="#d0aa40" /><polygon points="80,535 560,648 560,662 80,552" fill="#a4a6a4" /><ellipse cx="140" cy="700" rx="140" ry="50" fill="#b88048" /><ellipse cx="430" cy="735" rx="150" ry="45" fill="#a87e4e" /><ellipse cx="175" cy="630" rx="38" ry="32" fill="#a07862" /><ellipse cx="235" cy="650" rx="36" ry="36" fill="#9a8a5c" /><ellipse cx="295" cy="650" rx="32" ry="32" fill="#9a9c9c" /><ellipse cx="300" cy="780" rx="95" ry="65" fill="#3a3660" /><ellipse cx="60" cy="760" rx="45" ry="55" fill="#a89070" /><rect x="0" y="830" width="726" height="250" fill="#3e362c" /></g><line x1="440" y1="130" x2="300" y2="820" stroke="#8a7a50" stroke-width="4"/><line x1="530" y1="120" x2="420" y2="820" stroke="#8a7a50" stroke-width="4"/><line x1="605" y1="110" x2="560" y2="820" stroke="#8a7a50" stroke-width="3"/><rect x="45" y="820" width="645" height="210" fill="rgba(8,6,4,0.74)"/><text x="363" y="920" text-anchor="middle" font-size="50" font-weight="bold" fill="#fff" textLength="350" lengthAdjust="spacingAndGlyphs">THE ODYSSEY</text><text x="363" y="968" text-anchor="middle" font-size="26" font-weight="bold" fill="#f4f4f4" textLength="98" lengthAdjust="spacingAndGlyphs">HOMER</text></svg></div></div>
<div class="card" style="left:1369px;top:280px;width:157px;height:234px;box-shadow:0 1px 12px 3px rgba(20,15,5,0.62)"><div class="cin" style="width:152px;height:229px"><svg style="left:-4.5px;top:-4.5px" width="160" height="238" viewBox="0 0 726 1080"><g filter="url(#bl)"><rect x="0" y="0" width="726" height="1080" fill="#110605" /><ellipse cx="610" cy="260" rx="190" ry="310" fill="#4a1a0c" /><ellipse cx="600" cy="180" rx="130" ry="140" fill="#62261a" /><ellipse cx="520" cy="90" rx="80" ry="60" fill="#4a1c10" /><ellipse cx="680" cy="380" rx="60" ry="150" fill="#5a2212" /><ellipse cx="650" cy="560" rx="60" ry="80" fill="#3a140a" /><polygon points="245,215 260,160 310,128 380,128 425,170 432,235 400,250 300,222 255,250" fill="#2a140c" /><polygon points="255,240 300,222 392,236 422,262 402,332 372,382 322,392 280,362 250,292" fill="#9a6e58" /><polygon points="258,245 300,228 360,236 340,300 320,380 285,360 255,292" fill="#c69e86" /><polygon points="245,318 276,338 292,402 266,402 246,362" fill="#e2dad2" /><polygon points="280,400 380,370 470,400 560,440 640,500 642,562 590,582 520,562 440,522 330,492 280,452" fill="#5e2410" /><ellipse cx="350" cy="440" rx="55" ry="30" fill="#82381a" /><ellipse cx="520" cy="500" rx="60" ry="30" fill="#7a3216" /><polygon points="62,600 140,594 200,630 216,690 190,722 150,702 120,662 70,662" fill="#c09878" /><rect x="55" y="600" width="18" height="100" fill="#d8d0c8" /><polygon points="540,540 600,520 640,560 652,600 612,642 562,682 522,702 510,652" fill="#b48666" /><rect x="0" y="800" width="726" height="280" fill="#0a0605" /></g><line x1="690" y1="185" x2="125" y2="760" stroke="#8a6838" stroke-width="5.5"/><rect x="45" y="820" width="645" height="210" fill="rgba(8,6,4,0.74)"/><text x="363" y="897" text-anchor="middle" font-size="50" font-weight="bold" fill="#fff" textLength="540" lengthAdjust="spacingAndGlyphs">THE ADVENTURES OF</text><text x="363" y="945" text-anchor="middle" font-size="50" font-weight="bold" fill="#fff" textLength="515" lengthAdjust="spacingAndGlyphs">SHERLOCK HOLMES</text><text x="363" y="993" text-anchor="middle" font-size="26" font-weight="bold" fill="#f4f4f4" textLength="325" lengthAdjust="spacingAndGlyphs">ARTHUR CONAN DOYLE</text></svg></div></div>
<!--/COVERS-->

<!-- dropdown menu -->
<div class="menu"></div>
<div class="msel"></div>
<div class="mbar"></div>
<div class="a mi sx" style="left:232px;top:227px">All Books</div>
<div class="a mi sx" style="left:232px;top:265px">Favourites</div>
<div class="a mi sx" style="left:232px;top:304px">Downloads</div>
<div class="a mi sx" style="left:232px;top:342px">Reading</div>
<div class="a mi sx" style="left:232px;top:381px">Not Started</div>
<div class="a mi sx" style="left:232px;top:419px">Completed</div>

<!--PANEL-->
<div class="a sx ptitle" style="left:1543px;top:281.3px">The Adventures of</div>
<div class="a sx ptitle" style="left:1543px;top:306.2px">Sherlock Holmes</div>
<div class="a sx pby" style="left:1544px;top:331.1px">by</div>
<div class="a sx pauth" style="left:1543.5px;top:350.1px">Arthur Conan Doyle</div>
<div class="a sx prow" style="left:1369px;top:544.9px"><b class="lab">Percentage read :</b> <span class="val">76 %</span></div>
<div class="a sx prow" style="left:1369px;top:571.3px"><b class="lab">Date added :</b> <span class="val">11/7/2021 2:14:40 PM</span></div>
<div class="a sx prow" style="left:1369px;top:598.2px"><b class="lab">Last read :</b> <span class="val">11/7/2021 2:56:48 PM</span></div>
<div class="a sx prow" style="left:1369px;top:624.6px"><b class="lab">Word count :</b> <span class="val">101562</span></div>
<div class="a sx prow" style="left:1369px;top:651.7px"><b class="lab">Line count :</b> <span class="val">6838</span></div>
<div class="a sx prow" style="left:1369px;top:678.0px"><b class="lab">Description :</b> <span class="val"></span></div>
<div class="a pdesc j" style="left:1369px;top:703.9px">The world’s first consulting detective investigates a</div>
<div class="a pdesc j" style="left:1369px;top:723.9px">variety of intriguing cases in the first Holmes short story</div>
<div class="a pdesc" style="left:1369px;top:743.4px">collection.</div>
<div class="a sx prow" style="left:1369px;top:772.3px"><b class="lab">Language :</b> <span class="val">en-GB</span></div>
<div class="a sx prow" style="left:1369px;top:799.0px"><b class="lab">Publisher :</b> <span class="val">Standard Ebooks</span></div>
<div class="a sx prow" style="left:1369px;top:825.0px"><b class="lab">Genre :</b></div>
<div class="a sx prow val" style="left:1422px;top:825.0px">Holmes, Sherlock (Fictitious character) -- Fiction,</div>
<div class="a sx prow val" style="left:1422px;top:844.5px">Private investigators -- England -- Fiction,</div>
<div class="a sx prow val" style="left:1422px;top:864.3px">Detective and mystery stories, English</div>
<div class="a sx prow" style="left:1369px;top:890.1px"><b class="lab">File path :</b></div>
<div class="a sx prow val" style="left:1440px;top:890.1px">AppStorage\Assets\Books\adventures-of-</div>
<div class="a sx prow val" style="left:1440px;top:909.4px">sherlock-holmes.epub</div>
<div class="btn" style="left:1370px"></div>
<div class="a bt" style="left:1370px;width:112px;text-align:center;top:1042.3px">Open Book</div>
<div class="btn" style="left:1496px"></div>
<div class="a bt" style="left:1496px;width:112px;text-align:center;top:1042.3px">Edit Book Info</div>
<div class="btn" style="left:1622px"></div>
<div class="a bt" style="left:1622px;width:112px;text-align:center;top:1042.3px">Close</div>
<!--/PANEL-->

</body></html>
